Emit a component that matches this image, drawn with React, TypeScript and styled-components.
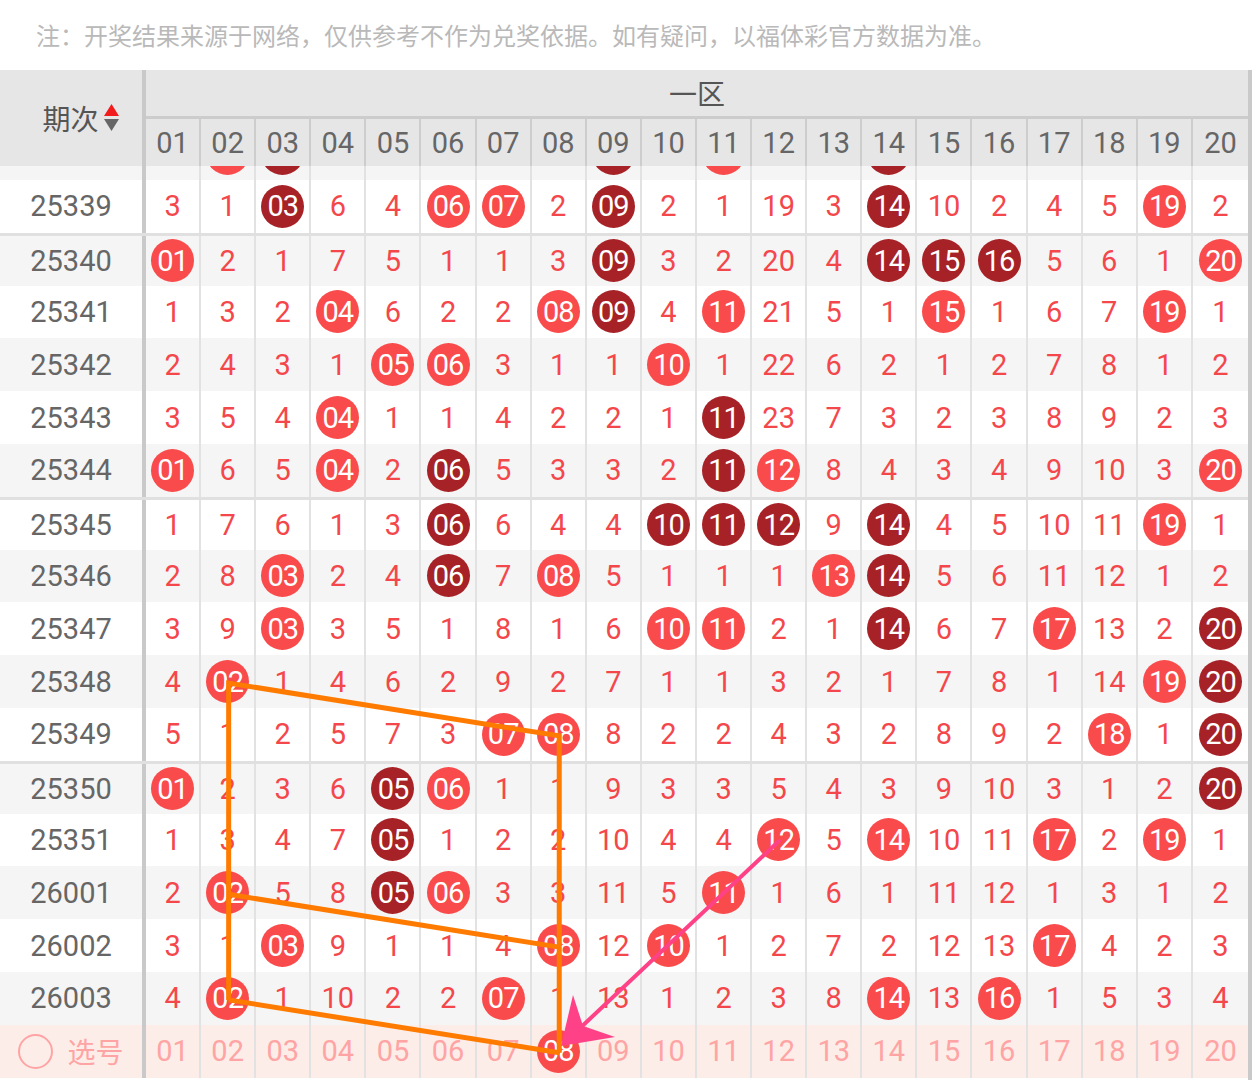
import React from "react";
import styled, { createGlobalStyle } from "styled-components";

const GlobalStyle = createGlobalStyle`
  html, body { margin: 0; padding: 0; background: #ffffff; }
  body { font-family: Roboto, "Noto Sans CJK SC", sans-serif; }
  * { box-sizing: border-box; }
`;

const COL_W = 55.1;
const LEFT_W = 146;
const ROW_H = 52.8;
const BODY_TOP = 166;
const FIRST_ROW_TOP = 180;

type Entry = number | "L" | "D";

const RAW: [string, string][] = [
  ["25338", "2 L D 5 3 4 3 1 D 1 L 18 2 D 9 1 3 4 5 1"],
  ["25339", "3 1 D 6 4 L L 2 D 2 1 19 3 D 10 2 4 5 L 2"],
  ["25340", "L 2 1 7 5 1 1 3 D 3 2 20 4 D D D 5 6 1 L"],
  ["25341", "1 3 2 L 6 2 2 L D 4 L 21 5 1 L 1 6 7 L 1"],
  ["25342", "2 4 3 1 L L 3 1 1 L 1 22 6 2 1 2 7 8 1 2"],
  ["25343", "3 5 4 L 1 1 4 2 2 1 D 23 7 3 2 3 8 9 2 3"],
  ["25344", "L 6 5 L 2 D 5 3 3 2 D L 8 4 3 4 9 10 3 L"],
  ["25345", "1 7 6 1 3 D 6 4 4 D D D 9 D 4 5 10 11 L 1"],
  ["25346", "2 8 L 2 4 D 7 L 5 1 1 1 L D 5 6 11 12 1 2"],
  ["25347", "3 9 L 3 5 1 8 1 6 L L 2 1 D 6 7 L 13 2 D"],
  ["25348", "4 L 1 4 6 2 9 2 7 1 1 3 2 1 7 8 1 14 L D"],
  ["25349", "5 1 2 5 7 3 L L 8 2 2 4 3 2 8 9 2 L 1 D"],
  ["25350", "L 2 3 6 D L 1 1 9 3 3 5 4 3 9 10 3 1 2 D"],
  ["25351", "1 3 4 7 D 1 2 2 10 4 4 L 5 L 10 11 L 2 L 1"],
  ["26001", "2 L 5 8 D L 3 3 11 5 L 1 6 1 11 12 1 3 1 2"],
  ["26002", "3 1 L 9 1 1 4 L 12 L 1 2 7 2 12 13 L 4 2 3"],
  ["26003", "4 L 1 10 2 2 L 1 13 1 2 3 8 L 13 L 1 5 3 4"],
];

const rows = RAW.map(([period, s]) => ({
  period,
  cells: s.split(" ").map((t) => (t === "L" || t === "D" ? t : Number(t))) as Entry[],
}));

const pad = (n: number) => String(n).padStart(2, "0");
const NUMS = Array.from({ length: 20 }, (_, i) => i + 1);
const SEPARATED = new Set(["25340", "25345", "25350"]);

const Page = styled.div`
  position: relative;
  width: 1252px;
  height: 1080px;
  overflow: hidden;
  background: #ffffff;
`;

const Note = styled.div`
  height: 70px;
  display: flex;
  align-items: center;
  padding-left: 36px;
  padding-bottom: 2px;
  font-family: "Noto Sans CJK SC", sans-serif;
  font-size: 24px;
  color: #b9b9b9;
  white-space: nowrap;
`;

const Table = styled.div`
  width: 1252px;
  border-right: 4px solid #c9c9c9;
`;

const Head = styled.div`
  display: grid;
  grid-template-columns: ${LEFT_W}px 1fr;
  height: 96px;
  background: #e6e6e6;
`;

const HeadPeriod = styled.div`
  display: flex;
  align-items: center;
  justify-content: center;
  gap: 4px;
  padding-left: 20px;
  border-right: 4px solid #c9c9c9;
  font-family: "Noto Sans CJK SC", sans-serif;
  font-size: 28px;
  color: #555555;
`;

const HeadZone = styled.div`
  display: flex;
  flex-direction: column;
`;

const ZoneTitle = styled.div`
  height: 49px;
  border-bottom: 3px solid #cccccc;
  display: flex;
  align-items: center;
  justify-content: center;
  font-family: "Noto Sans CJK SC", sans-serif;
  font-size: 28px;
  color: #555555;
`;

const HeadNums = styled.div`
  flex: 1;
  display: grid;
  grid-template-columns: repeat(20, minmax(0, 1fr));
`;

const HeadNum = styled.div<{ $last: boolean }>`
  display: flex;
  align-items: center;
  justify-content: center;
  border-right: ${(p) => (p.$last ? "none" : "2px solid #cdcdcd")};
  font-size: 29px;
  color: #666666;
`;

const Body = styled.div`
  height: ${1080 - BODY_TOP}px;
  overflow: hidden;
`;

const Row = styled.div<{ $striped: boolean; $sep: boolean; $lift: number }>`
  display: grid;
  grid-template-columns: ${LEFT_W}px repeat(20, minmax(0, 1fr));
  height: ${ROW_H}px;
  margin-top: ${(p) => -p.$lift}px;
  background: ${(p) => (p.$striped ? "#f5f5f5" : "#ffffff")};
  border-top: ${(p) => (p.$sep ? "3px solid #e0e0e0" : "none")};
`;

const PickRowBox = styled(Row)`
  background: #fdede8;
`;

const PeriodCell = styled.div`
  display: flex;
  align-items: center;
  justify-content: center;
  border-right: 4px solid #c9c9c9;
  font-size: 29px;
  color: #666666;
`;

const Cell = styled.div<{ $last: boolean }>`
  display: flex;
  align-items: center;
  justify-content: center;
  border-right: ${(p) => (p.$last ? "none" : "2px solid #e2e2e2")};
  font-size: 29px;
  color: #f4474b;
`;

const PickCell = styled(Cell)`
  color: #ffa4a4;
`;

const Ball = styled.span<{ $tone: "L" | "D" }>`
  width: 43px;
  height: 43px;
  border-radius: 50%;
  display: flex;
  align-items: center;
  justify-content: center;
  background: ${(p) => (p.$tone === "D" ? "#a62226" : "#f94b4b")};
  color: #ffffff;
  font-size: 29px;
  letter-spacing: -1px;
`;

const PickLabel = styled.div`
  display: flex;
  align-items: center;
  justify-content: center;
  gap: 14px;
  border-right: 4px solid #c9c9c9;
  font-family: "Noto Sans CJK SC", sans-serif;
  font-size: 28px;
  color: #ffa4a4;
`;

const Radio = styled.span`
  width: 35px;
  height: 35px;
  border-radius: 50%;
  border: 2px solid #ffa4a4;
`;

const Overlay = styled.svg`
  position: absolute;
  left: 0;
  top: 0;
  pointer-events: none;
`;

const SortIcon = () => (
  <svg width="17" height="30" viewBox="0 0 17 30">
    <polygon points="8.5,1 16,13 1,13" fill="#f21c1c" />
    <polygon points="1,16 16,16 8.5,28" fill="#666666" />
  </svg>
);

const cx = (col: number) => LEFT_W + COL_W * (col - 0.5);
const cy = (i: number) => FIRST_ROW_TOP + ROW_H * i + ROW_H / 2 + 1.5;

const Lines = () => {
  // index 0 = 25339
  const r25348 = cy(9);
  const r25349 = cy(10);
  const r26001 = cy(13);
  const r26002 = cy(14);
  const r26003 = cy(15);
  const rPick = cy(16);
  const x2 = cx(2);
  const x8 = cx(8);
  const orange = "#ff7b00";
  return (
    <Overlay width={1252} height={1080} viewBox="0 0 1252 1080">
      <g stroke={orange} strokeWidth={5} fill="none" strokeLinejoin="miter">
        <polyline points={`${x2},${r26003} ${x2},${r25348} ${x8},${r25349} ${x8},${rPick}`} />
        <line x1={x2} y1={r26001} x2={x8} y2={r26002} />
        <line x1={x2} y1={r26003} x2={x8} y2={rPick} />
      </g>
      <line x1={779} y1={841} x2={578} y2={1030} stroke="#ff4287" strokeWidth={4} strokeLinecap="round" />
      <polygon points="561,1046 573,995 583,1026 615,1037" fill="#ff4287" />
    </Overlay>
  );
};

export default function App() {
  return (
    <>
      <GlobalStyle />
      <Page>
        <Note>注：开奖结果来源于网络，仅供参考不作为兑奖依据。如有疑问，以福体彩官方数据为准。</Note>
        <Table>
          <Head>
            <HeadPeriod>
              期次
              <SortIcon />
            </HeadPeriod>
            <HeadZone>
              <ZoneTitle>一区</ZoneTitle>
              <HeadNums>
                {NUMS.map((n) => (
                  <HeadNum key={n} $last={n === 20}>
                    {pad(n)}
                  </HeadNum>
                ))}
              </HeadNums>
            </HeadZone>
          </Head>
          <Body>
            {rows.map((r, i) => {
              const partial = i === 0;
              return (
                <Row
                  key={r.period}
                  $striped={i % 2 === 0}
                  $sep={SEPARATED.has(r.period)}
                  $lift={partial ? ROW_H - (FIRST_ROW_TOP - BODY_TOP) : 0}
                >
                  <PeriodCell>{partial ? null : r.period}</PeriodCell>
                  {r.cells.map((c, j) => (
                    <Cell key={j} $last={j === 19}>
                      {typeof c === "number" ? (partial ? null : c) : <Ball $tone={c}>{partial ? null : pad(j + 1)}</Ball>}
                    </Cell>
                  ))}
                </Row>
              );
            })}
            <PickRowBox $striped={false} $sep={false} $lift={0}>
              <PickLabel>
                <Radio />
                选号
              </PickLabel>
              {NUMS.map((n) => (
                <PickCell key={n} $last={n === 20}>
                  {n === 8 ? <Ball $tone="L">{pad(n)}</Ball> : pad(n)}
                </PickCell>
              ))}
            </PickRowBox>
          </Body>
        </Table>
        <Lines />
      </Page>
    </>
  );
}
